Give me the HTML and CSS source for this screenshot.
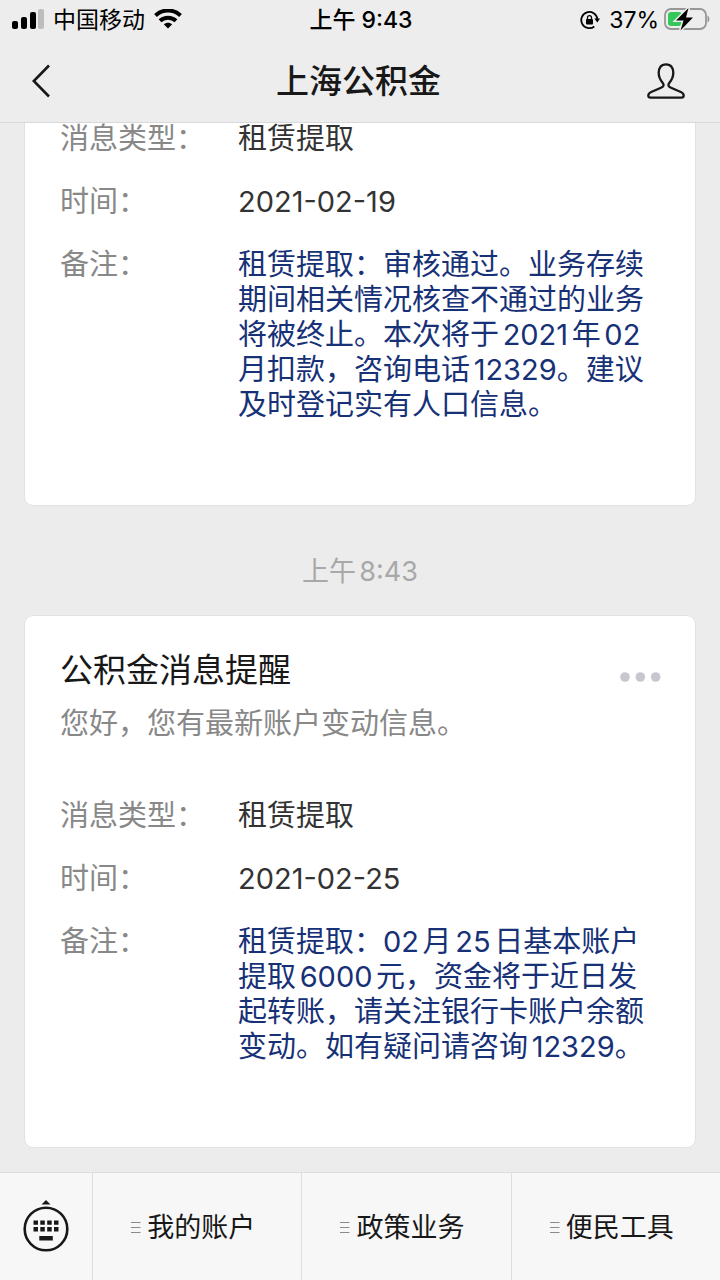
FILE: index.html
```html
<!DOCTYPE html>
<html lang="zh-CN">
<head>
<meta charset="utf-8">
<meta name="viewport" content="width=device-width, initial-scale=1">
<title>上海公积金</title>
<link rel="stylesheet" href="styles.css">
</head>
<body>
<div class="app">
  <header class="top">
    <div class="status">
      <div class="status-left">
        <svg width="32" height="22" viewBox="0 0 32 22" aria-hidden="true">
          <rect x="0" y="12" width="6" height="8" rx="2"/>
          <rect x="9" y="8" width="6" height="12" rx="2"/>
          <rect x="18" y="3" width="6" height="17" rx="2"/>
          <rect x="26" y="0" width="6" height="20" rx="2" fill="#bdbdbd"/>
        </svg>
        <span class="carrier">中国移动</span>
        <svg width="28" height="22" viewBox="0 1 28 22" aria-hidden="true">
          <g fill="none" stroke="#000" stroke-width="4">
            <path d="M1.500 7.500C8.500 .8 19.500 .8 26.500 7.500"/>
            <path d="M6 12.800C10.500 8.600 17.500 8.600 22 12.800"/>
          </g>
          <path d="M14 20.500 9.800 16.300C12 14.200 16 14.200 18.200 16.300Z"/>
        </svg>
      </div>
      <div class="clock">上午 9:43</div>
      <div class="status-right">
        <svg width="20" height="20" viewBox="0 0 20 20" aria-hidden="true">
          <path d="M14.300 16.500A8.100 8.100 0 1 1 17.400 9" fill="none" stroke="#000" stroke-width="1.800"/>
          <path d="M14.300 8.600H20L17.300 12.600Z"/>
          <rect x="6" y="9" width="7" height="5.500" rx="1"/>
          <path d="M7.500 9.500V7.600A2 2 0 0 1 11.500 7.600V9.500" fill="none" stroke="#000" stroke-width="1.300"/>
        </svg>
        <span class="percent">37%</span>
        <svg width="46" height="24" viewBox="0 0 46 24" aria-hidden="true">
          <rect x="1" y="1" width="41" height="20" rx="6" fill="none" stroke="#979797" stroke-width="1.800"/>
          <rect x="4" y="4" width="14" height="14" rx="3" fill="#34c759"/>
          <path d="M43.500 7.500C46 8.500 46 13.500 43.500 14.500Z" fill="#979797"/>
          <path d="M24.500 0 12 12.500H19.500L16.500 22.500 29 9.500H22Z" stroke="#ededed" stroke-width="3" paint-order="stroke"/>
        </svg>
      </div>
    </div>
    <div class="nav">
      <button class="icon-button" type="button" aria-label="返回">
        <svg width="20" height="34" viewBox="0 0 20 34" aria-hidden="true"><path d="M17 1.500 1.800 17 17 32.500" fill="none" stroke="#181818" stroke-width="2.600"/></svg>
      </button>
      <h1 class="title">上海公积金</h1>
      <button class="icon-button" type="button" aria-label="公众号资料">
        <svg width="38" height="36" viewBox="0 0 38 36" aria-hidden="true"><path d="M19 1.300C14 1.300 11.700 5 11.700 9.800C11.700 14.500 13.500 17.300 15.600 19.700C17.400 22 16.800 23.400 14 24.700L4.200 29C2 30 1.300 31 1.300 32.500C1.300 34 2 34.600 3.600 34.600H34.400C36 34.600 36.700 34 36.700 32.500C36.700 31 36 30 33.800 29L24 24.700C21.200 23.400 20.600 22 22.400 19.700C24.500 17.300 26.300 14.500 26.300 9.800C26.300 5 24 1.300 19 1.300Z" fill="none" stroke="#181818" stroke-width="2.300"/></svg>
      </button>
    </div>
  </header>

  <main class="chat">
    <article class="card">
      <dl class="fields">
        <dt>消息类型：</dt><dd>租赁提取</dd>
        <dt>时间：</dt><dd>2021-02-19</dd>
        <dt>备注：</dt><dd class="note">租赁提取：审核通过。业务存续期间相关情况核查不通过的业务将被终止。本次将于2021年02月扣款，咨询电话12329。建议及时登记实有人口信息。</dd>
      </dl>
    </article>
    <time class="stamp">上午8:43</time>
    <article class="card">
      <div class="card-head">
        <h2 class="card-title">公积金消息提醒</h2>
        <button class="more" type="button" aria-label="更多">
          <svg width="42" height="10" viewBox="0 0 42 10" fill="#c8c7cf" aria-hidden="true"><circle cx="6" cy="5" r="4.800"/><circle cx="21.300" cy="5" r="4.800"/><circle cx="36.700" cy="5" r="4.800"/></svg>
        </button>
      </div>
      <p class="intro">您好，您有最新账户变动信息。</p>
      <dl class="fields">
        <dt>消息类型：</dt><dd>租赁提取</dd>
        <dt>时间：</dt><dd>2021-02-25</dd>
        <dt>备注：</dt><dd class="note">租赁提取：02月25日基本账户提取6000元，资金将于近日发起转账，请关注银行卡账户余额变动。如有疑问请咨询12329。</dd>
      </dl>
    </article>
  </main>

  <footer class="menu">
    <button class="keyboard" type="button" aria-label="切换键盘">
      <svg width="46" height="54" viewBox="0 0 46 54" fill="#181818" aria-hidden="true">
        <path d="M23 0 27.500 4.500H18.500Z"/>
        <circle cx="23" cy="29" r="21.300" fill="none" stroke="#181818" stroke-width="2.600"/>
        <path d="M10.500 20.500h4.500v4.200h-4.500zM17.300 20.500h4.500v4.200h-4.500zM24.200 20.500h4.500v4.200h-4.500zM31 20.500h4.500v4.200h-4.500zM10.500 27h4.500v4.500h-4.500zM17.300 27h4.500v4.500h-4.500zM24.200 27h4.500v4.500h-4.500zM31 27h4.500v4.500h-4.500zM16.300 36h13.500v4.500h-13.500z"/>
      </svg>
    </button>
    <button class="menu-item" type="button"><svg width="10" height="12" viewBox="0 0 10 12" aria-hidden="true"><path d="M0 .5H9.500M0 5.500H9.500M0 10.500H9.500" stroke="#8a8a8a" stroke-width="1.200"/></svg>我的账户</button>
    <button class="menu-item" type="button"><svg width="10" height="12" viewBox="0 0 10 12" aria-hidden="true"><path d="M0 .5H9.500M0 5.500H9.500M0 10.500H9.500" stroke="#8a8a8a" stroke-width="1.200"/></svg>政策业务</button>
    <button class="menu-item" type="button"><svg width="10" height="12" viewBox="0 0 10 12" aria-hidden="true"><path d="M0 .5H9.500M0 5.500H9.500M0 10.500H9.500" stroke="#8a8a8a" stroke-width="1.200"/></svg>便民工具</button>
  </footer>
</div>
</body>
</html>
```

FILE: styles.css
```css
* {
  box-sizing: border-box;
}

body,
h1,
h2,
p,
dl,
dd {
  margin: 0;
}

body {
  font-family: Inter, "Noto Sans CJK SC", sans-serif;
  color: #181818;
  background: #ececec;
}

button {
  padding: 0;
  border: 0;
  background: none;
  font: inherit;
  color: inherit;
}

svg {
  display: block;
  flex: none;
}

.app {
  display: flex;
  flex-direction: column;
  height: 100vh;
}

.top {
  flex: none;
  background: #ededed;
  border-bottom: 1px solid #d9d9d9;
}

.status {
  display: grid;
  grid-template-columns: 1fr auto 1fr;
  align-items: center;
  height: 40px;
  padding: 0 10px 0 12px;
  font-size: 23px;
  line-height: 32px;
  color: #000;
}

.status-left,
.status-right {
  display: flex;
  align-items: center;
  gap: 9px;
}

.status-right {
  justify-content: flex-end;
  gap: 5px;
}

.percent {
  margin-left: 4px;
}

.clock {
  font-weight: 500;
}

.nav {
  display: flex;
  align-items: center;
  justify-content: space-between;
  height: 82px;
  padding: 0 35px 0 32px;
}

.icon-button {
  display: flex;
  width: 38px;
}

.title {
  font-size: 33px;
  line-height: 48px;
  font-weight: 500;
}

.chat {
  flex: 1;
  min-height: 0;
  display: flex;
  flex-direction: column;
  justify-content: flex-end;
  overflow: hidden;
  padding: 0 24px 24px;
}

.card {
  flex: none;
  padding: 32px 34px 83px 35px;
  border: 1px solid #e2e2e2;
  border-radius: 9px;
  background: #fff;
  font-size: 29px;
  line-height: 35px;
}

.stamp {
  flex: none;
  padding: 48px 0 25px;
  font-size: 27px;
  line-height: 36px;
  text-align: center;
  text-autospace: normal;
  color: #a8a8a8;
}

.card-head {
  display: flex;
  align-items: center;
  justify-content: space-between;
}

.card-title {
  font-size: 33px;
  line-height: 45px;
  font-weight: 400;
}

.more {
  padding-top: 12px;
}

.intro {
  margin: 13px 0 57px;
  color: #888;
}

.fields {
  display: grid;
  grid-template-columns: 178px 1fr;
  row-gap: 28px;
  color: #333;
}

.fields dt {
  color: #888;
}

.fields .note {
  color: #173177;
  text-autospace: normal;
}

.menu {
  flex: none;
  display: grid;
  grid-template-columns: 92px 1fr 1fr 1fr;
  height: 108px;
  border-top: 1px solid #dedede;
  background: #f7f7f7;
}

.keyboard,
.menu-item {
  display: flex;
  align-items: center;
  justify-content: center;
}

.menu-item {
  gap: 6px;
  padding: 2px 8px 0 0;
  border-left: 1px solid #dedede;
  font-size: 27px;
  line-height: 40px;
}
```
